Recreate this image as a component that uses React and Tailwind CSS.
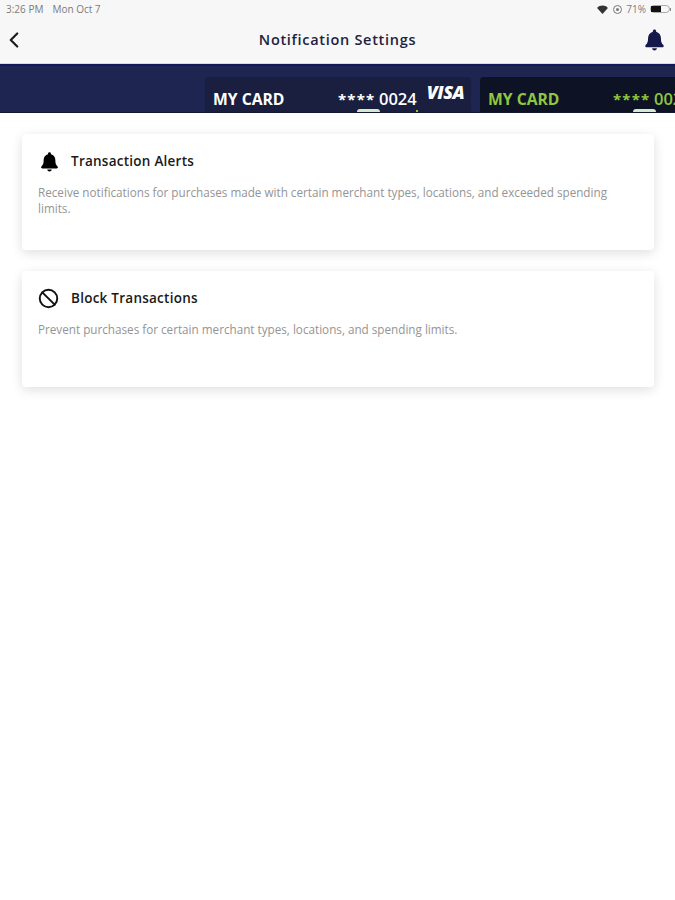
import React from 'react';
import { ChevronLeft, Ban } from 'lucide-react';

const font = { fontFamily: '"Open Sans", sans-serif' };

const BellIcon = ({ className }) => (
  <svg viewBox="0 0 24 24" className={className} fill="currentColor">
    <path d="M12 1.5c-1 0-1.7.7-1.7 1.7v.6C7.3 4.6 5.3 7.2 5.3 10.4c0 4.6-1.1 5.9-2.3 7.1-.4.4-.6.8-.6 1.2 0 .8.6 1.3 1.4 1.3h16.4c.8 0 1.4-.5 1.4-1.3 0-.4-.2-.8-.6-1.2-1.2-1.2-2.3-2.5-2.3-7.1 0-3.2-2-5.8-5-6.6v-.6c0-1-.7-1.7-1.7-1.7z" />
    <path d="M9.5 21.2h5c0 1.4-1.1 2.3-2.5 2.3s-2.5-.9-2.5-2.3z" />
  </svg>
);

const WifiIcon = () => (
  <svg viewBox="0 0 12 10" className="h-[9px] w-[11px] text-[#333]" fill="currentColor">
    <path d="M6 10 0 3.2C1.6 1.4 3.7.5 6 .5s4.4.9 6 2.7z" />
  </svg>
);

const SettingCard = ({ icon, title, text }) => (
  <div className="h-[116px] rounded bg-white pl-[16px] pr-[44px] pt-[16px] shadow-[0_3px_12px_rgba(0,0,0,0.13)]">
    <div className="flex h-[22px] items-center">
      <div className="flex w-[33px] items-center">{icon}</div>
      <h2 className="text-[13.5px] font-semibold tracking-[0.25px] text-[#1a1a1a]">{title}</h2>
    </div>
    <p className="mt-[12px] text-[11.7px] leading-[16px] text-[#949494]">{text}</p>
  </div>
);

const BankCard = ({ green }) => {
  const color = green ? 'text-[#8fc73e]' : 'text-white';
  return (
    <div className={`relative h-[35px] w-[266px] shrink-0 overflow-hidden rounded-t ${green ? 'bg-[#0e1225]' : 'bg-[#1a1f3f]'}`}>
      <div className="flex items-center pl-2 pt-[11px]">
        <span className={`w-[125px] shrink-0 text-[15.7px] font-bold leading-[22px] ${color}`}>MY CARD</span>
        <span className={`w-[41px] shrink-0 text-[15px] font-bold leading-[22px] tracking-[1.2px] ${color}`}>****</span>
        <span className={`text-[16.5px] font-semibold leading-[22px] ${color}`}>0024</span>
        {!green && <span className="-mt-[14px] ml-[10px] text-[18px] font-extrabold italic leading-[22px] tracking-[-0.5px] text-white">VISA</span>}
      </div>
      <div className={`absolute bottom-0 h-[3px] w-[23px] rounded-t-sm bg-[#d5ebcf] ${green ? 'left-[153px]' : 'left-[152px]'}`} />
      {!green && <div className="absolute bottom-0 left-[211px] h-[2px] w-[2px] bg-[#8fc73e]" />}
    </div>
  );
};

export default function App() {
  return (
    <div className="min-h-[900px] bg-white" style={font}>
      <div className="border-b border-[#d9d9dc] bg-[#f7f7f8]">
        <div className="flex h-[17px] items-center justify-between pl-[6px] pr-[4px] pt-[1px] text-[10px] text-[#7b7b7b]">
          <div className="flex gap-[9px]">
            <span>3:26 PM</span>
            <span>Mon Oct 7</span>
          </div>
          <div className="flex items-center">
            <WifiIcon />
            <span className="ml-[5px] flex h-[9px] w-[9px] items-center justify-center rounded-full border border-[#777]">
              <span className="h-[3px] w-[3px] rounded-full bg-[#777]" />
            </span>
            <span className="ml-[4px]">71%</span>
            <div className="ml-[4px] flex items-center">
              <div className="h-[8px] w-[20px] rounded-sm border border-[#aaa] pr-[8px]">
                <div className="h-full bg-[#111]" />
              </div>
              <div className="h-[3px] w-[1px] bg-[#888]" />
            </div>
          </div>
        </div>
        <div className="relative flex h-[46px] items-center justify-center">
          <ChevronLeft className="absolute left-[1px] top-[10px] h-[26px] w-[26px] text-[#1b1b1b]" strokeWidth={2} />
          <h1 className="text-[14.5px] font-semibold tracking-[0.7px] text-[#1c2340]">Notification Settings</h1>
          <BellIcon className="absolute right-[9px] top-[11px] h-[23px] w-[23px] text-[#14194a]" />
        </div>
      </div>

      <div className="flex h-[49px] items-end gap-[9px] overflow-hidden border-b border-[#14182f] border-t-2 border-t-[#14175a] bg-[#1e2550] pl-[205px]">
        <BankCard />
        <BankCard green />
      </div>

      <div className="flex flex-col gap-[21px] pl-[22px] pr-[21px] pt-[21px]">
        <SettingCard
          icon={<BellIcon className="ml-[1px] h-[21px] w-[21px] text-black" />}
          title="Transaction Alerts"
          text="Receive notifications for purchases made with certain merchant types, locations, and exceeded spending limits."
        />
        <SettingCard
          icon={<Ban className="h-[21px] w-[21px] text-[#111]" strokeWidth={2.2} />}
          title="Block Transactions"
          text="Prevent purchases for certain merchant types, locations, and spending limits."
        />
      </div>
    </div>
  );
}
